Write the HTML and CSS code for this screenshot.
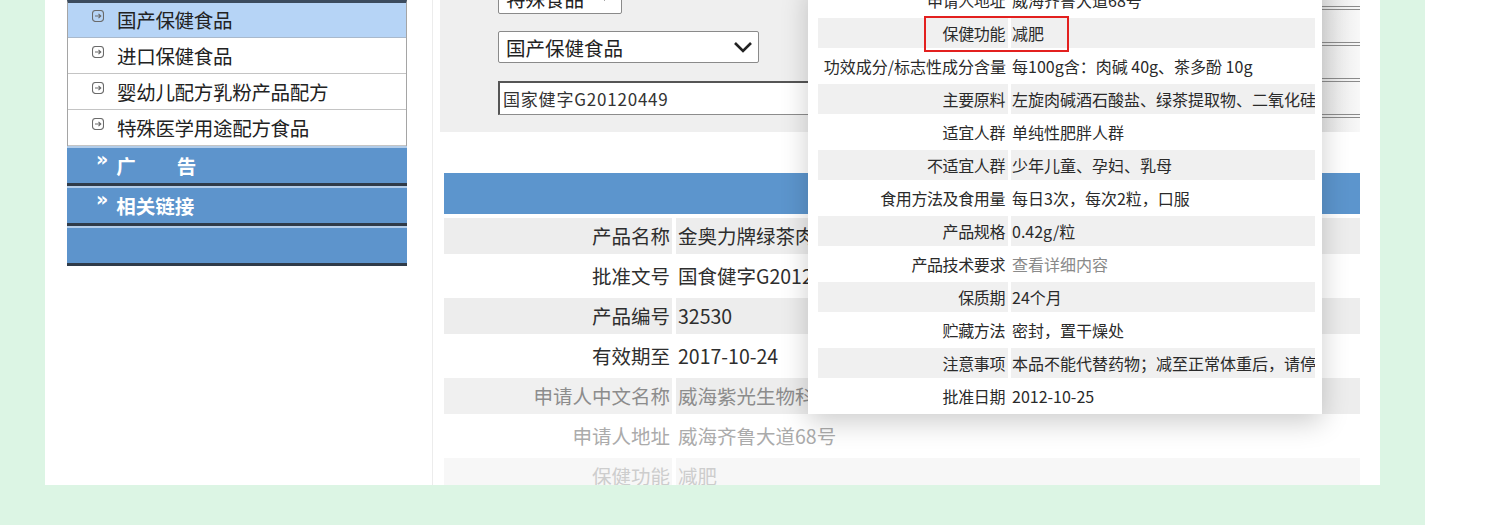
FILE: index.html
```html
<!DOCTYPE html>
<html lang="zh-CN">
<head>
    <meta charset="UTF-8">
    <meta name="viewport" content="width=device-width, initial-scale=1.0">
    <title>国产保健食品查询</title>
    <link rel="stylesheet" href="styles.css">
</head>
<body>
    <div class="stage">
        <div class="panel">
            <!-- 左侧菜单 -->
            <aside class="sidebar">
                <ul class="menu">
                    <li class="item active"><svg class="ico" viewBox="0 0 12 12"><rect x="0.5" y="0.5" width="11" height="11" rx="3"/><path d="M3 6h6M6.5 3.8L8.8 6 6.5 8.2"/></svg>国产保健食品</li>
                    <li class="item"><svg class="ico" viewBox="0 0 12 12"><rect x="0.5" y="0.5" width="11" height="11" rx="3"/><path d="M3 6h6M6.5 3.8L8.8 6 6.5 8.2"/></svg>进口保健食品</li>
                    <li class="item"><svg class="ico" viewBox="0 0 12 12"><rect x="0.5" y="0.5" width="11" height="11" rx="3"/><path d="M3 6h6M6.5 3.8L8.8 6 6.5 8.2"/></svg>婴幼儿配方乳粉产品配方</li>
                    <li class="item"><svg class="ico" viewBox="0 0 12 12"><rect x="0.5" y="0.5" width="11" height="11" rx="3"/><path d="M3 6h6M6.5 3.8L8.8 6 6.5 8.2"/></svg>特殊医学用途配方食品</li>
                </ul>
                <div class="menu-head"><span class="raquo">»</span><span class="spread">广</span>告</div>
                <div class="menu-head"><span class="raquo">»</span>相关链接</div>
                <div class="menu-head"></div>
            </aside>

            <!-- 查询区和结果 -->
            <main class="main">
                <div class="search">
                    <div class="fields">
                        <div class="select select-short">特殊食品<svg class="caret-small" viewBox="0 0 10 6"><path d="M0 0h10L5 6z"/></svg></div>
                        <div class="select select-long">国产保健食品<svg class="chevron" viewBox="0 0 20 12"><path d="M2 2l8 8 8-8"/></svg></div>
                        <div class="text-input">国家健字G20120449</div>
                    </div>
                    <div class="edge"><span></span><span></span><span></span><span></span></div>
                </div>

                <table class="detail">
                    <colgroup><col class="col-name"><col></colgroup>
                    <tr><th colspan="2"></th></tr>
                    <tr class="shade"><td class="label">产品名称</td><td class="value">金奥力牌绿茶肉碱胶囊</td></tr>
                    <tr><td class="label">批准文号</td><td class="value">国食健字G20120449</td></tr>
                    <tr class="shade"><td class="label">产品编号</td><td class="value">32530</td></tr>
                    <tr><td class="label">有效期至</td><td class="value">2017-10-24</td></tr>
                    <tr class="shade fade1"><td class="label">申请人中文名称</td><td class="value">威海紫光生物科技开发有限公司</td></tr>
                    <tr class="fade2"><td class="label">申请人地址</td><td class="value">威海齐鲁大道68号</td></tr>
                    <tr class="shade fade3"><td class="label">保健功能</td><td class="value">减肥</td></tr>
                </table>
            </main>

            <!-- 放大的详情 -->
            <div class="popup">
                <table class="popup-table">
                    <colgroup><col class="col-label"><col></colgroup>
                    <tr><td class="label">申请人地址</td><td class="value">威海齐鲁大道68号</td></tr>
                    <tr class="shade"><td class="label">保健功能</td><td class="value">减肥</td></tr>
                    <tr><td class="label wide">功效成分/标志性成分含量</td><td class="value">每100g含：肉碱 40g、茶多酚 10g</td></tr>
                    <tr class="shade"><td class="label">主要原料</td><td class="value">左旋肉碱酒石酸盐、绿茶提取物、二氧化硅、硬脂酸镁</td></tr>
                    <tr><td class="label">适宜人群</td><td class="value">单纯性肥胖人群</td></tr>
                    <tr class="shade"><td class="label">不适宜人群</td><td class="value">少年儿童、孕妇、乳母</td></tr>
                    <tr><td class="label">食用方法及食用量</td><td class="value">每日3次，每次2粒，口服</td></tr>
                    <tr class="shade"><td class="label">产品规格</td><td class="value">0.42g/粒</td></tr>
                    <tr><td class="label">产品技术要求</td><td class="value link">查看详细内容</td></tr>
                    <tr class="shade"><td class="label">保质期</td><td class="value">24个月</td></tr>
                    <tr><td class="label">贮藏方法</td><td class="value">密封，置干燥处</td></tr>
                    <tr class="shade"><td class="label">注意事项</td><td class="value">本品不能代替药物；减至正常体重后，请停止服用</td></tr>
                    <tr><td class="label">批准日期</td><td class="value">2012-10-25</td></tr>
                </table>
                <div class="mark"></div>
            </div>
        </div>
    </div>
</body>
</html>
```

FILE: styles.css
```css
/* 页面基础 */
* {
    margin: 0;
    padding: 0;
    box-sizing: border-box;
}

body {
    background-color: #ffffff;
    font-family: "Noto Sans CJK SC", "Noto Sans", sans-serif;
    color: #2a2a2a;
    width: 1500px;
    height: 525px;
    overflow: hidden;
}

.stage {
    width: 1425px;
    height: 525px;
    background-color: #dcf5e4;
    padding-left: 45px;
}

.panel {
    position: relative;
    width: 1335px;
    height: 485px;
    background-color: #ffffff;
    display: flex;
    overflow: hidden;
}

/* 左侧菜单 */
.sidebar {
    width: 388px;
    flex: none;
    padding: 0 24px 0 22px;
    border-right: 1px solid #ececec;
}

.menu {
    list-style: none;
    width: 340px;
    border-top: 3px solid #3b4b5e;
    border-left: 1px solid #a5a5a5;
    border-right: 1px solid #a5a5a5;
}

.item {
    height: 36px;
    display: flex;
    align-items: center;
    padding-left: 24px;
    font-size: 19.5px;
    line-height: 1;
    letter-spacing: -0.3px;
    color: #222;
    background-color: #ffffff;
    border-bottom: 1px solid #c4c4c4;
}

.item.active {
    height: 35px;
    background-color: #b6d4f6;
    border-bottom-color: #a9b9cc;
}

.ico {
    width: 12px;
    height: 12px;
    flex: none;
    margin-right: 13px;
    margin-top: -8px;
    fill: none;
    stroke: #6a6a6a;
    stroke-width: 1.1;
}

.menu-head {
    width: 340px;
    height: 40px;
    display: flex;
    align-items: center;
    padding-left: 29px;
    background-color: #5d94cc;
    border-top: 2px solid #b2cdea;
    border-bottom: 3px solid #2f3b49;
    color: #ffffff;
    font-size: 19.5px;
    font-weight: bold;
    line-height: 1;
}

.raquo {
    align-self: flex-start;
    margin-top: 2px;
    margin-right: 8px;
    font-size: 19px;
    font-weight: bold;
    font-family: "DejaVu Sans", sans-serif;
}

.spread {
    margin-right: 41px;
}

/* 右侧主体 */
.main {
    flex: 1;
    padding: 0 16px 0 7px;
}

.search {
    display: flex;
    margin-top: -30px;
    margin-right: 4px;
    padding: 12px 0 17px 58px;
    background-color: #efefef;
}

.fields {
    display: flex;
    flex-direction: column;
}

.select {
    height: 32px;
    display: flex;
    align-items: center;
    padding-left: 7px;
    background-color: #ffffff;
    border: 1px solid #8a8a8a;
    border-radius: 2px;
    font-size: 19.5px;
    color: #222;
}

.select-short {
    width: 124px;
}

.caret-small {
    width: 9px;
    height: 6px;
    margin-left: 16px;
    fill: #333;
}

.select-long {
    width: 261px;
    margin-top: 17px;
    justify-content: space-between;
    padding-right: 5px;
}

.chevron {
    width: 20px;
    height: 12px;
    fill: none;
    stroke: #222;
    stroke-width: 2.6;
}

.text-input {
    width: 640px;
    height: 34px;
    margin-top: 18px;
    padding-left: 3px;
    display: flex;
    align-items: center;
    background-color: #ffffff;
    border: 1px solid #8c8c8c;
    border-top: 2px solid #555;
    border-left: 2px solid #555;
    font-size: 17px;
    letter-spacing: 0.8px;
    color: #333;
}

.edge {
    margin: -12px 0 -17px auto;
    width: 38px;
    display: flex;
    flex-direction: column;
    gap: 32px;
    padding-top: 36px;
    background: linear-gradient(to right, #e4e4e4, #f8f8f8);
}

.edge span {
    height: 4px;
    border-top: 1px solid #8a8a8a;
    border-bottom: 1px solid #8a8a8a;
}

/* 结果表格 */
.detail {
    width: 924px;
    margin-top: 37px;
    border-spacing: 4px;
    table-layout: fixed;
    font-size: 19.5px;
    color: #2e2e2e;
}

.col-name {
    width: 228px;
}

.detail th {
    height: 41px;
    background-color: #5c95cd;
}

.detail td {
    height: 36px;
    line-height: 36px;
    white-space: nowrap;
    overflow: hidden;
}

.detail .label {
    text-align: right;
    padding-right: 2px;
}

.detail .value {
    padding-left: 2px;
}

.shade td {
    background-color: #ededed;
}

.fade1 td {
    color: #8c8c8c;
}

.fade1 .label {
    background-color: #f0f0f0;
}

.fade2 td {
    color: #ababab;
}

.fade3 td {
    color: #cdcdcd;
    background-color: #f7f7f7;
}

/* 放大的详情框 */
.popup {
    position: absolute;
    left: 763px;
    top: -18px;
    width: 514px;
    padding: 0 4px 0 7px;
    background-color: #ffffff;
    box-shadow: 0 8px 26px rgba(0, 0, 0, 0.2);
}

.popup-table {
    width: 100%;
    border-spacing: 3px;
    table-layout: fixed;
    font-size: 16px;
    color: #2a2a2a;
}

.col-label {
    width: 190px;
}

.popup-table td {
    height: 30px;
    line-height: 30px;
    white-space: nowrap;
    overflow: hidden;
}

.popup-table .label {
    text-align: right;
    padding-right: 3px;
    letter-spacing: -0.4px;
}

.popup-table .wide {
    letter-spacing: 0;
    padding-right: 2px;
}

.popup-table .value {
    padding-left: 1px;
}

.popup-table .shade td {
    background-color: #f0f0f0;
}

.popup-table .link {
    color: #8a8a8a;
}

.mark {
    position: absolute;
    left: 116px;
    top: 34px;
    width: 145px;
    height: 36px;
    border: 2px solid #e3201f;
}
```
